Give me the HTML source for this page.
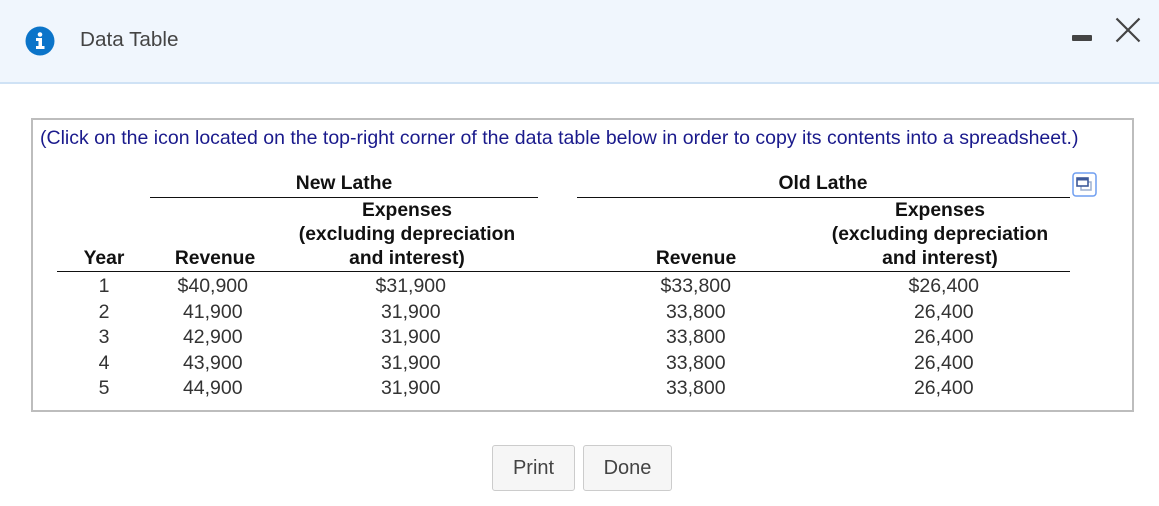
<!DOCTYPE html>
<html><head><style>
body{margin:0;width:1159px;height:506px;background:#fff;font-family:"Liberation Sans",Arial,sans-serif;position:relative;overflow:hidden}
.hd{position:absolute;left:0;top:0;width:1159px;height:82px;background:#f0f6fd;border-bottom:2px solid #cfe2f5}
.a{position:absolute;white-space:nowrap}
.c{transform:translateX(-50%);text-align:center}
.b{font-weight:bold;color:#111;font-size:19.3px;line-height:24px}
.d{font-size:19.5px;color:#333;line-height:24px}
.r{transform:translateX(-100%)}
.ln{position:absolute;height:1px;background:#111}
.btn{position:absolute;top:445px;height:44px;border:1px solid #ccc;border-radius:3px;background:#f6f6f6;font-size:20px;color:#444;line-height:44px;text-align:center}
</style></head><body>
<div class="hd"></div>
<svg class="a" style="left:25px;top:26px" width="30" height="30" viewBox="0 0 30 30"><circle cx="15" cy="15" r="14.5" fill="#0b74c9"/><circle cx="15" cy="8.5" r="2.3" fill="#fff"/><path d="M11 12h6v8h2.5v3h-8.5v-3h2.5v-5h-2.5z" fill="#fff"/></svg>
<div class="a" style="left:80px;top:28px;font-size:20.7px;color:#444">Data Table</div>
<div class="a" style="left:1072px;top:35px;width:20px;height:6px;background:#444;border-radius:1px"></div>
<svg class="a" style="left:1115px;top:17px" width="26" height="26" viewBox="0 0 26 26"><path d="M1.5 1.5L24.5 24.5M24.5 1.5L1.5 24.5" stroke="#444" stroke-width="2.2"/></svg>
<div class="a" style="left:31px;top:118px;width:1099px;height:290px;border:2px solid #bdbdbd"></div>
<div class="a" style="left:40px;top:127px;font-size:19.5px;color:#1a1a8c">(Click on the icon located on the top-right corner of the data table below in order to copy its contents into a spreadsheet.)</div>
<svg class="a" style="left:1072px;top:172px" width="25" height="25" viewBox="0 0 25 25"><rect x="1" y="1" width="23" height="23" rx="3" fill="#fff" stroke="#6f9ef0" stroke-width="1.5"/><rect x="9" y="10" width="10" height="8" fill="none" stroke="#9db0d0" stroke-width="1.5"/><rect x="5" y="6" width="11" height="8" fill="#fff" stroke="#3e5a9a" stroke-width="1.6"/><rect x="5" y="6" width="11" height="2.5" fill="#3e5a9a"/></svg>
<div class="a c b" style="left:344px;top:172px">New Lathe</div>
<div class="a c b" style="left:823px;top:172px">Old Lathe</div>
<div class="ln" style="left:150px;top:197px;width:388px"></div>
<div class="ln" style="left:577px;top:197px;width:493px"></div>
<div class="a c b" style="left:407px;top:199px">Expenses<br>(excluding depreciation<br>and interest)</div>
<div class="a c b" style="left:940px;top:199px">Expenses<br>(excluding depreciation<br>and interest)</div>
<div class="a c b" style="left:104px;top:247px">Year</div>
<div class="a c b" style="left:215px;top:247px">Revenue</div>
<div class="a c b" style="left:696px;top:247px">Revenue</div>
<div class="ln" style="left:57px;top:271px;width:1013px"></div>
<div class="a c d" style="left:104px;top:274px;line-height:25.5px">1<br>2<br>3<br>4<br>5</div>
<div class="a r d" style="left:248px;top:274px;line-height:25.5px;text-align:right">$40,900<br>41,900&nbsp;<br>42,900&nbsp;<br>43,900&nbsp;<br>44,900&nbsp;</div>
<div class="a r d" style="left:446px;top:274px;line-height:25.5px;text-align:right">$31,900<br>31,900&nbsp;<br>31,900&nbsp;<br>31,900&nbsp;<br>31,900&nbsp;</div>
<div class="a r d" style="left:731px;top:274px;line-height:25.5px;text-align:right">$33,800<br>33,800&nbsp;<br>33,800&nbsp;<br>33,800&nbsp;<br>33,800&nbsp;</div>
<div class="a r d" style="left:979px;top:274px;line-height:25.5px;text-align:right">$26,400<br>26,400&nbsp;<br>26,400&nbsp;<br>26,400&nbsp;<br>26,400&nbsp;</div>
<div class="btn" style="left:492px;width:81px">Print</div>
<div class="btn" style="left:583px;width:87px">Done</div>
</body></html>
